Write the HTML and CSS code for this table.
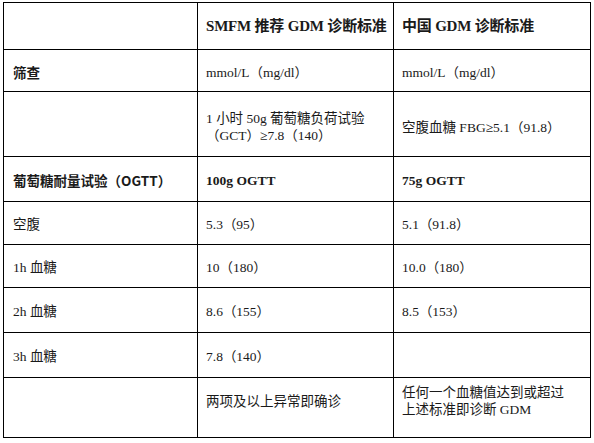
FILE: index.html
```html
<!DOCTYPE html>
<html lang="zh">
<head>
<meta charset="utf-8">
<link rel="stylesheet" href="styles.css">
</head>
<body>
<table class="gdm">
  <colgroup>
    <col class="c1"><col class="c2"><col class="c3">
  </colgroup>
  <tr class="head">
    <td></td>
    <td>SMFM 推荐 GDM 诊断标准</td>
    <td>中国 GDM 诊断标准</td>
  </tr>
  <tr class="r42">
    <td class="label">筛查</td>
    <td>mmol/L（mg/dl）</td>
    <td>mmol/L（mg/dl）</td>
  </tr>
  <tr class="r65">
    <td></td>
    <td>1 小时 50g 葡萄糖负荷试验<br>（GCT）≥7.8（140）</td>
    <td>空腹血糖 FBG≥5.1（91.8）</td>
  </tr>
  <tr class="r45">
    <td class="label">葡萄糖耐量试验（OGTT）</td>
    <td class="strong">100g OGTT</td>
    <td class="strong">75g OGTT</td>
  </tr>
  <tr class="r43">
    <td>空腹</td>
    <td>5.3（95）</td>
    <td>5.1（91.8）</td>
  </tr>
  <tr class="r43">
    <td>1h 血糖</td>
    <td>10（180）</td>
    <td>10.0（180）</td>
  </tr>
  <tr class="r45">
    <td>2h 血糖</td>
    <td>8.6（155）</td>
    <td>8.5（153）</td>
  </tr>
  <tr class="r45">
    <td>3h 血糖</td>
    <td>7.8（140）</td>
    <td></td>
  </tr>
  <tr class="r60">
    <td></td>
    <td>两项及以上异常即确诊</td>
    <td>任何一个血糖值达到或超过<br>上述标准即诊断 GDM</td>
  </tr>
</table>
</body>
</html>
```

FILE: styles.css
```css
html, body {
  margin: 0;
  padding: 0;
  background: #ffffff;
}

body {
  padding: 2px 0 0 3px;
  font-family: "Liberation Serif", "Noto Sans CJK SC", serif;
  color: #1a1a1a;
}

.gdm {
  border-collapse: collapse;
  table-layout: fixed;
  width: 587px;
}

.c1 { width: 194px; }
.c2 { width: 196px; }
.c3 { width: 197px; }

.gdm td {
  border: 1px solid #000;
  padding: 3px 4px 0 8px;
  font-size: 13.5px;
  line-height: 17px;
  font-weight: 400;
  vertical-align: middle;
  box-sizing: border-box;
  white-space: nowrap;
}

.gdm td:first-child {
  padding-left: 9px;
}

.head td {
  height: 47px;
  font-size: 15px;
  font-weight: 700;
  padding-top: 1px;
  letter-spacing: -0.2px;
}

.r42 td { height: 42px; }
.r43 td { height: 43px; }
.r45 td { height: 45px; }
.r65 td { height: 65px; padding-top: 6px; }
.r60 td { height: 60px; padding-top: 0; padding-bottom: 13px; }

.gdm td.label {
  font-family: "Noto Sans CJK SC", "Liberation Sans", sans-serif;
  font-weight: 700;
  font-size: 13.5px;
}

.gdm td.strong {
  font-weight: 700;
}
```
